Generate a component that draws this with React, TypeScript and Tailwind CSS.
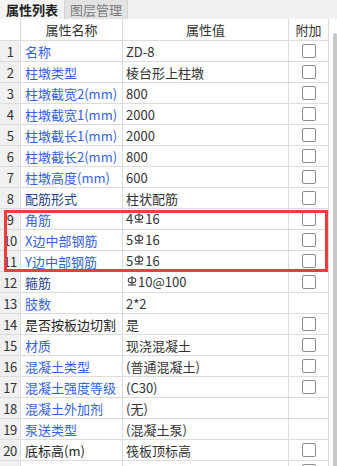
import React from "react";

const Rebar = () => (
  <svg width="10" height="10" viewBox="0 0 10 10" className="inline-block mx-[1px] relative top-[-3px]" fill="none" stroke="#333" strokeWidth="1.1">
    <line x1="5" y1="0.3" x2="5" y2="8.8" />
    <ellipse cx="5" cy="4.2" rx="3.8" ry="2.5" />
    <line x1="1" y1="9" x2="9" y2="9" />
  </svg>
);

type Row = { name: string; value: React.ReactNode; color: string; check: boolean };

const BLUE = "text-[#3461e0]";
const NAVY = "text-[#263f8f]";
const BLACK = "text-[#222]";

const rows: Row[] = [
  { name: "名称", value: "ZD-8", color: BLUE, check: true },
  { name: "柱墩类型", value: "棱台形上柱墩", color: BLUE, check: true },
  { name: "柱墩截宽2(mm)", value: "800", color: BLUE, check: true },
  { name: "柱墩截宽1(mm)", value: "2000", color: BLUE, check: true },
  { name: "柱墩截长1(mm)", value: "2000", color: BLUE, check: true },
  { name: "柱墩截长2(mm)", value: "800", color: BLUE, check: true },
  { name: "柱墩高度(mm)", value: "600", color: BLUE, check: true },
  { name: "配筋形式", value: "柱状配筋", color: NAVY, check: true },
  { name: "角筋", value: <>4<Rebar />16</>, color: BLUE, check: true },
  { name: "X边中部钢筋", value: <>5<Rebar />16</>, color: BLUE, check: true },
  { name: "Y边中部钢筋", value: <>5<Rebar />16</>, color: BLUE, check: true },
  { name: "箍筋", value: <><Rebar />10@100</>, color: NAVY, check: true },
  { name: "肢数", value: "2*2", color: BLUE, check: false },
  { name: "是否按板边切割", value: "是", color: BLACK, check: true },
  { name: "材质", value: "现浇混凝土", color: BLUE, check: true },
  { name: "混凝土类型", value: "(普通混凝土)", color: BLUE, check: true },
  { name: "混凝土强度等级", value: "(C30)", color: BLUE, check: true },
  { name: "混凝土外加剂", value: "(无)", color: BLUE, check: false },
  { name: "泵送类型", value: "(混凝土泵)", color: BLUE, check: false },
  { name: "底标高(m)", value: "筏板顶标高", color: BLACK, check: true },
  { name: "", value: "", color: BLACK, check: true },
];

const Check = () => (
  <div className="w-[14px] h-[14px] border border-[#8c8c8c] rounded-[2px] bg-white" />
);

export default function App() {
  return (
    <div
      className="w-[337px] h-[466px] overflow-hidden bg-white relative text-[13px] leading-none"
      style={{ fontFamily: '"Noto Sans CJK SC", "Noto Sans", sans-serif' }}
    >
      <div className="h-[19px] bg-[#f0f0f0] flex">
        <div className="w-[64px] h-[19px] flex items-center justify-center font-bold text-[#222] bg-[#f3f3f3]">
          属性列表
        </div>
        <div className="w-[64px] h-[19px] flex items-center justify-center text-[#7a7a7a] bg-[#e2e2e2] border-x border-[#d4d4d4]">
          图层管理
        </div>
      </div>
      <div className="flex">
        <div className="w-[329px] flex flex-col">
          <div className="h-[22px] flex border-b border-[#dcdcdc] text-[#333]">
            <div className="w-[21px] border-r border-[#dcdcdc]" />
            <div className="w-[102px] border-r border-[#dcdcdc] flex items-center justify-center">属性名称</div>
            <div className="w-[166px] border-r border-[#dcdcdc] flex items-center justify-center">属性值</div>
            <div className="w-[40px] border-r border-[#dcdcdc] flex items-center justify-center">附加</div>
          </div>
          {rows.map((r, i) => (
            <div key={i} className="h-[21px] shrink-0 flex border-b border-[#dcdcdc]">
              <div className="w-[21px] bg-[#f0f0f0] border-r border-[#dcdcdc] flex items-center justify-center text-[#333] tracking-[-0.5px]">
                {r.name ? i + 1 : ""}
              </div>
              <div className={`w-[102px] border-r border-[#dcdcdc] flex items-center pl-[4px] whitespace-nowrap ${r.color}`}>
                {r.name}
              </div>
              <div className="w-[166px] border-r border-[#dcdcdc] flex items-center pl-[3px] text-[#333] whitespace-nowrap">
                <span>{r.value}</span>
              </div>
              <div className="w-[40px] border-r border-[#dcdcdc] flex items-center justify-center">
                {r.check && <Check />}
              </div>
            </div>
          ))}
        </div>
        <div className="w-[8px] flex justify-end pt-[14px]">
          <div className="w-[4px] h-[500px] bg-[#c8c8c8] rounded-t-[2px]" />
        </div>
      </div>
      <div className="absolute left-[4px] top-[210px] w-[324px] h-[62px] border-[3px] border-[#f23c3c] pointer-events-none" />
    </div>
  );
}
